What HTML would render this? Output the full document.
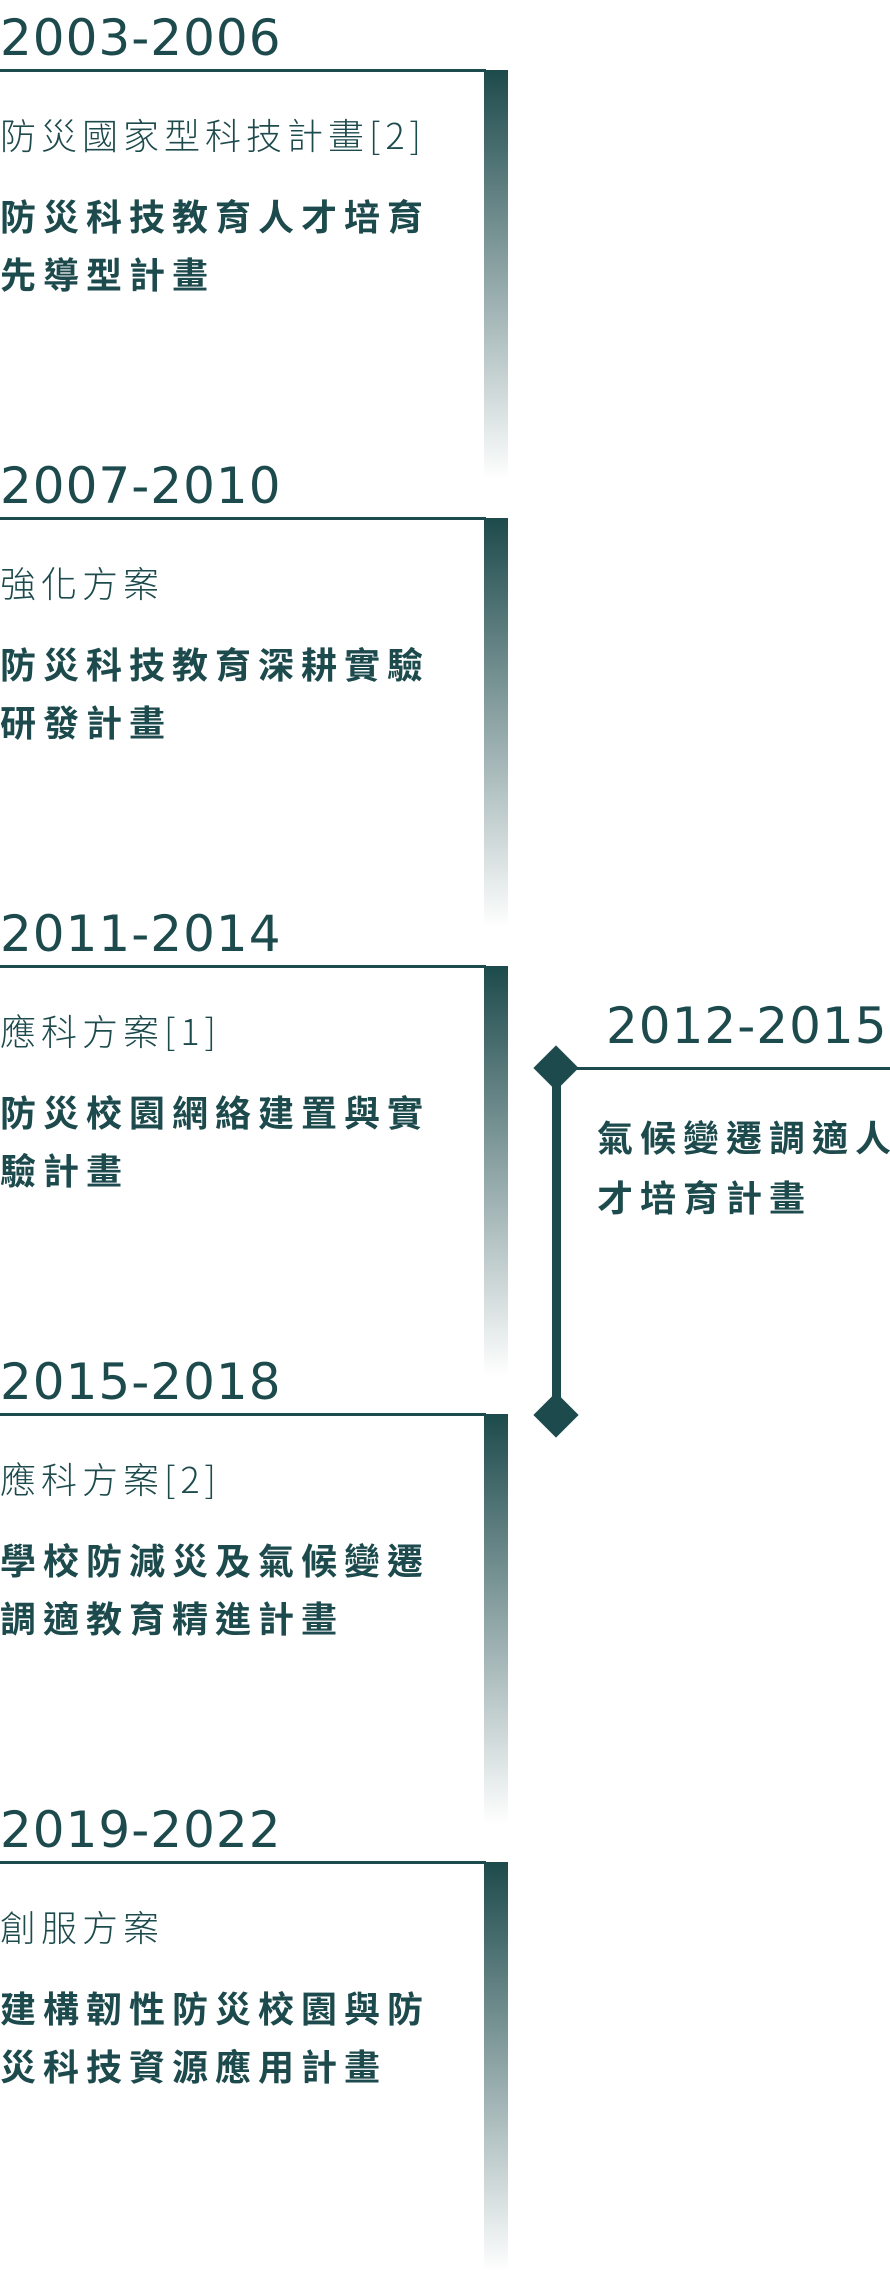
<!DOCTYPE html>
<html><head><meta charset="utf-8"><style>
html,body{margin:0;padding:0;background:#fff;}
body{width:890px;height:2276px;position:relative;overflow:hidden;color:#1d4a4c;font-family:"Liberation Sans","Noto Sans CJK TC",sans-serif;}
.sec{position:absolute;left:0;width:510px;height:448px;}
.yr{position:absolute;left:0;top:8px;font-size:50px;letter-spacing:1px;font-family:"DejaVu Sans","Liberation Sans",sans-serif;font-weight:500;line-height:60px;}
.ln{position:absolute;left:0;top:69px;width:486px;height:3px;background:#1d4a4c;}
.bar{position:absolute;left:484px;top:70px;width:24px;height:410px;background:linear-gradient(#1d4a4c,rgba(29,74,76,0.55) 45%,rgba(255,255,255,1));}
.sub{position:absolute;left:0;top:109px;font-size:36px;font-weight:300;letter-spacing:5px;line-height:50px;font-family:"Noto Sans CJK TC","Liberation Sans",sans-serif;white-space:nowrap;}
.tt{position:absolute;left:0;top:186px;font-size:36px;font-weight:700;letter-spacing:7px;line-height:58px;font-family:"Noto Sans CJK TC",sans-serif;width:450px;}
.r{position:absolute;}
</style></head><body>
<div class="sec" style="top:0"><div class="yr">2003-2006</div><div class="ln"></div><div class="bar"></div><div class="sub">防災國家型科技計畫[2]</div><div class="tt">防災科技教育人才培育<br>先導型計畫</div></div>
<div class="sec" style="top:448px"><div class="yr">2007-2010</div><div class="ln"></div><div class="bar"></div><div class="sub">強化方案</div><div class="tt">防災科技教育深耕實驗<br>研發計畫</div></div>
<div class="sec" style="top:896px"><div class="yr">2011-2014</div><div class="ln"></div><div class="bar"></div><div class="sub">應科方案[1]</div><div class="tt">防災校園網絡建置與實<br>驗計畫</div></div>
<div class="sec" style="top:1344px"><div class="yr">2015-2018</div><div class="ln"></div><div class="bar"></div><div class="sub">應科方案[2]</div><div class="tt">學校防減災及氣候變遷<br>調適教育精進計畫</div></div>
<div class="sec" style="top:1792px"><div class="yr">2019-2022</div><div class="ln"></div><div class="bar"></div><div class="sub">創服方案</div><div class="tt">建構韌性防災校園與防<br>災科技資源應用計畫</div></div>

<div class="r" style="left:606px;top:996px;font-size:50px;letter-spacing:1px;font-family:'DejaVu Sans','Liberation Sans',sans-serif;font-weight:500;line-height:60px;white-space:nowrap;">2012-2015</div>
<div class="r" style="left:570px;top:1067px;width:320px;height:3px;background:#1d4a4c;"></div>
<div class="r" style="left:552px;top:1068px;width:9px;height:347px;background:#1d4a4c;"></div>
<div class="r" style="left:540px;top:1052px;width:32px;height:32px;background:#1d4a4c;transform:rotate(45deg);"></div>
<div class="r" style="left:540px;top:1399px;width:32px;height:32px;background:#1d4a4c;transform:rotate(45deg);"></div>
<div class="r" style="left:597px;top:1106px;font-size:36px;font-weight:700;letter-spacing:7px;line-height:60px;font-family:'Noto Sans CJK TC',sans-serif;white-space:nowrap;">氣候變遷調適人<br>才培育計畫</div>
</body></html>
